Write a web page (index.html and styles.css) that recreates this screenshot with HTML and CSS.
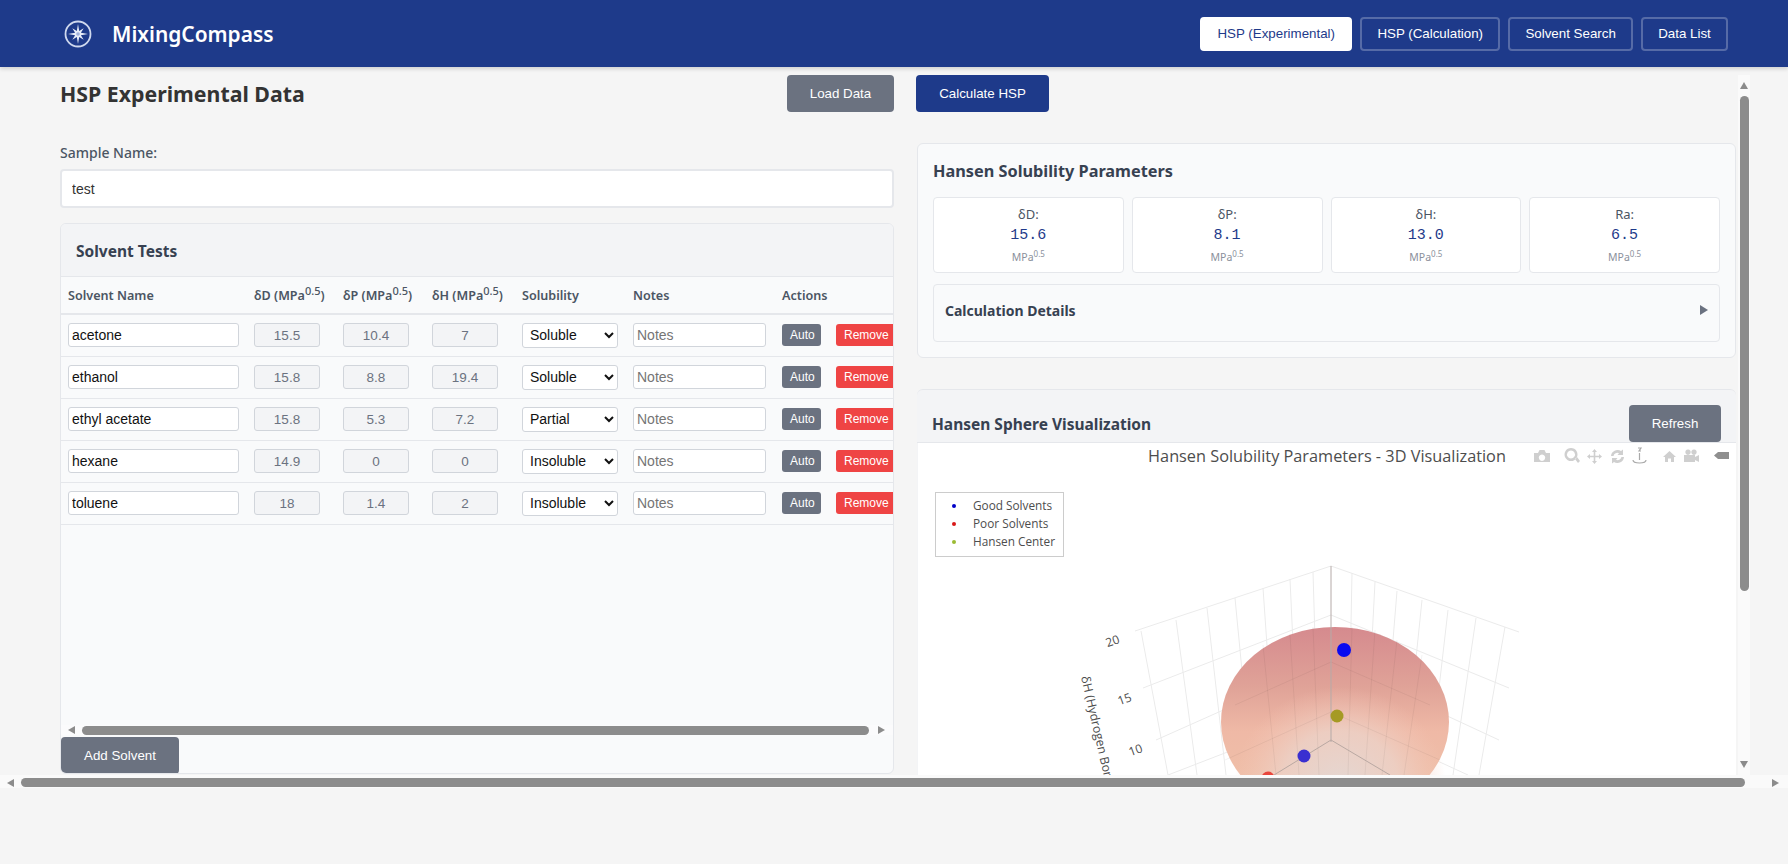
FILE: index.html
```html
<!DOCTYPE html>
<html lang="en">
<head>
    <meta charset="UTF-8">
    <title>MixingCompass</title>
    <link rel="stylesheet" href="styles.css">
</head>
<body>
    <header class="app-header">
        <div class="brand">
            <svg class="brand-logo" width="28" height="28" viewBox="0 0 28 28">
                <circle cx="14" cy="14" r="12.5" fill="none" stroke="#cfd8ee" stroke-width="1.8"/>
                <polygon points="14,4 15.2,11.1 19.7,8.3 16.9,12.8 24,14 16.9,15.2 19.7,19.7 15.2,16.9 14,24 12.8,16.9 8.3,19.7 11.1,15.2 4,14 11.1,12.8 8.3,8.3 12.8,11.1" fill="#e8edf8"/>
                <circle cx="14" cy="14" r="1.8" fill="#9fb0da"/>
            </svg>
            <span class="brand-name">MixingCompass</span>
        </div>
        <nav class="main-nav">
            <button class="nav-btn active">HSP (Experimental)</button>
            <button class="nav-btn">HSP (Calculation)</button>
            <button class="nav-btn">Solvent Search</button>
            <button class="nav-btn">Data List</button>
        </nav>
    </header>

    <main class="workspace">
        <section class="left-col">
            <div class="toolbar">
                <h1 class="page-title">HSP Experimental Data</h1>
                <button class="btn btn-gray btn-load">Load Data</button>
            </div>
            <label class="field-label" for="sample-name">Sample Name:</label>
            <input class="sample-input" id="sample-name" type="text" value="test">

            <div class="tests-panel">
                <div class="tests-header"><h2 class="panel-title">Solvent Tests</h2></div>
                <div class="table-wrap">
                    <table class="tests-table">
                        <colgroup>
                            <col class="col-name"><col class="col-d"><col class="col-p"><col class="col-h">
                            <col class="col-sol"><col class="col-notes"><col class="col-actions">
                        </colgroup>
                        <thead>
                            <tr>
                                <th>Solvent Name</th>
                                <th>δD (MPa<sup>0.5</sup>)</th>
                                <th>δP (MPa<sup>0.5</sup>)</th>
                                <th>δH (MPa<sup>0.5</sup>)</th>
                                <th>Solubility</th>
                                <th>Notes</th>
                                <th>Actions</th>
                            </tr>
                        </thead>
                        <tbody>
                            <tr>
                                <td><input class="cell-input name-input" value="acetone"></td>
                                <td><input class="cell-input num-input" value="15.5" readonly></td>
                                <td><input class="cell-input num-input" value="10.4" readonly></td>
                                <td><input class="cell-input num-input" value="7" readonly></td>
                                <td><select class="cell-select"><option>Soluble</option></select></td>
                                <td><input class="cell-input notes-input" placeholder="Notes"></td>
                                <td class="actions"><button class="mini-btn mini-auto">Auto</button><button class="mini-btn mini-remove">Remove</button></td>
                            </tr>
                            <tr>
                                <td><input class="cell-input name-input" value="ethanol"></td>
                                <td><input class="cell-input num-input" value="15.8" readonly></td>
                                <td><input class="cell-input num-input" value="8.8" readonly></td>
                                <td><input class="cell-input num-input" value="19.4" readonly></td>
                                <td><select class="cell-select"><option>Soluble</option></select></td>
                                <td><input class="cell-input notes-input" placeholder="Notes"></td>
                                <td class="actions"><button class="mini-btn mini-auto">Auto</button><button class="mini-btn mini-remove">Remove</button></td>
                            </tr>
                            <tr>
                                <td><input class="cell-input name-input" value="ethyl acetate"></td>
                                <td><input class="cell-input num-input" value="15.8" readonly></td>
                                <td><input class="cell-input num-input" value="5.3" readonly></td>
                                <td><input class="cell-input num-input" value="7.2" readonly></td>
                                <td><select class="cell-select"><option>Partial</option></select></td>
                                <td><input class="cell-input notes-input" placeholder="Notes"></td>
                                <td class="actions"><button class="mini-btn mini-auto">Auto</button><button class="mini-btn mini-remove">Remove</button></td>
                            </tr>
                            <tr>
                                <td><input class="cell-input name-input" value="hexane"></td>
                                <td><input class="cell-input num-input" value="14.9" readonly></td>
                                <td><input class="cell-input num-input" value="0" readonly></td>
                                <td><input class="cell-input num-input" value="0" readonly></td>
                                <td><select class="cell-select"><option>Insoluble</option></select></td>
                                <td><input class="cell-input notes-input" placeholder="Notes"></td>
                                <td class="actions"><button class="mini-btn mini-auto">Auto</button><button class="mini-btn mini-remove">Remove</button></td>
                            </tr>
                            <tr>
                                <td><input class="cell-input name-input" value="toluene"></td>
                                <td><input class="cell-input num-input" value="18" readonly></td>
                                <td><input class="cell-input num-input" value="1.4" readonly></td>
                                <td><input class="cell-input num-input" value="2" readonly></td>
                                <td><select class="cell-select"><option>Insoluble</option></select></td>
                                <td><input class="cell-input notes-input" placeholder="Notes"></td>
                                <td class="actions"><button class="mini-btn mini-auto">Auto</button><button class="mini-btn mini-remove">Remove</button></td>
                            </tr>
                        </tbody>
                    </table>
                </div>
                <div class="hbar table-bar">
                    <span class="arrow arrow-left"></span>
                    <span class="hbar-thumb"></span>
                    <span class="arrow arrow-right"></span>
                </div>
                <div class="add-row"><button class="btn btn-gray btn-add">Add Solvent</button></div>
            </div>
        </section>

        <section class="right-col">
            <div class="right-toolbar"><button class="btn btn-blue">Calculate HSP</button></div>

            <div class="results-panel">
                <h2 class="panel-title results-title">Hansen Solubility Parameters</h2>
                <div class="param-grid">
                    <div class="param-card">
                        <div class="param-label">δD:</div>
                        <div class="param-value">15.6</div>
                        <div class="param-unit">MPa<sup>0.5</sup></div>
                    </div>
                    <div class="param-card">
                        <div class="param-label">δP:</div>
                        <div class="param-value">8.1</div>
                        <div class="param-unit">MPa<sup>0.5</sup></div>
                    </div>
                    <div class="param-card">
                        <div class="param-label">δH:</div>
                        <div class="param-value">13.0</div>
                        <div class="param-unit">MPa<sup>0.5</sup></div>
                    </div>
                    <div class="param-card">
                        <div class="param-label">Ra:</div>
                        <div class="param-value">6.5</div>
                        <div class="param-unit">MPa<sup>0.5</sup></div>
                    </div>
                </div>
                <div class="details-box">
                    <span class="details-title">Calculation Details</span>
                    <span class="details-arrow"></span>
                </div>
            </div>

            <div class="viz-panel">
                <div class="viz-header">
                    <h2 class="panel-title">Hansen Sphere Visualization</h2>
                    <button class="btn btn-gray btn-refresh">Refresh</button>
                </div>
                <div class="plot">
                    <svg class="plot-svg" width="818" height="332" viewBox="918 443 818 332">
                        <defs>
                            <linearGradient id="sphere-fill" x1="0" y1="0" x2="0" y2="1">
                                <stop offset="0" stop-color="#d58a8e"/>
                                <stop offset="0.32" stop-color="#e0a398"/>
                                <stop offset="0.55" stop-color="#efb9a6"/>
                                <stop offset="1" stop-color="#efc4aa"/>
                            </linearGradient>
                            <radialGradient id="sphere-lobe" cx="0.5" cy="0.55" r="0.5">
                                <stop offset="0" stop-color="#e4d8d4" stop-opacity="0.95"/>
                                <stop offset="0.55" stop-color="#ecd2c8" stop-opacity="0.8"/>
                                <stop offset="1" stop-color="#f4c6b6" stop-opacity="0"/>
                            </radialGradient>
                        </defs>

                        <g class="grid-lines">
                            <path d="M1331 566L1135 631M1331 615L1143 688M1331 662L1156 740M1331 712L1168 775"/>
                            <path d="M1331 566L1519 632M1331 615L1509 688M1331 662L1499 740M1331 712L1468 775"/>
                            <path d="M1141 631L1168 775M1176 620L1197 775M1207 608L1226 775M1235 598L1252 775M1263 588L1276 775M1290 579L1299 775M1313 572L1319 775"/>
                            <path d="M1352 573L1348 775M1375 582L1365 775M1397 591L1382 775M1422 600L1404 775M1448 610L1429 775M1476 618L1453 775M1505 627L1479 775"/>
                        </g>

                        <ellipse cx="1335" cy="722" rx="114" ry="95" fill="url(#sphere-fill)"/>
                        <ellipse cx="1340" cy="775" rx="106" ry="98" fill="url(#sphere-lobe)"/>
                        <path class="grid-over" d="M1313 627L1319 775M1290 635L1299 775M1263 645L1276 775M1352 627L1348 775M1375 630L1365 775M1397 640L1382 775M1422 655L1404 775M1331 662L1235 705M1331 662L1430 705M1331 712L1225 760M1331 712L1440 760"/>
                        <line class="axis-line" x1="1331" y1="566" x2="1331" y2="742"/>
                        <path class="floor-line" d="M1331 740L1274 775M1331 740L1390 775"/>

                        <circle cx="1344" cy="650" r="7" fill="#0a0af0"/>
                        <circle cx="1337" cy="716" r="6.5" fill="#a59a24"/>
                        <circle cx="1304" cy="756" r="6.5" fill="#3a2fd0"/>
                        <circle cx="1268" cy="778" r="6.5" fill="#e8463c"/>

                        <text class="plot-title" x="1327" y="462" text-anchor="middle">Hansen Solubility Parameters - 3D Visualization</text>

                        <rect class="legend-box" x="935.5" y="492.5" width="128" height="64"/>
                        <circle cx="954" cy="506" r="2" fill="#0000c8"/>
                        <circle cx="954" cy="524" r="2" fill="#d81818"/>
                        <circle cx="954" cy="542" r="2" fill="#9bbb33"/>
                        <text class="legend-text" x="973" y="510">Good Solvents</text>
                        <text class="legend-text" x="973" y="528">Poor Solvents</text>
                        <text class="legend-text" x="973" y="546">Hansen Center</text>

                        <text class="tick" transform="translate(1114 645) rotate(-20)" text-anchor="middle">20</text>
                        <text class="tick" transform="translate(1126 703) rotate(-20)" text-anchor="middle">15</text>
                        <text class="tick" transform="translate(1137 754) rotate(-20)" text-anchor="middle">10</text>
                        <text class="axis-title" transform="translate(1081 677) rotate(77)">δH (Hydrogen Bonding)</text>

                        <g class="modebar">
                            <path d="M1534 453h4l1.5-3h5l1.5 3h4v9h-16zM1542 454.5a3.2 3.2 0 1 0 .01 0z" fill-rule="evenodd"/>
                            <path d="M1571 448a6.500 6.500 0 1 0 .01 0zM1571 450.500a4 4 0 1 1-.01 0zM1575 459l2-2 3 4-2 2z" fill-rule="evenodd"/>
                            <path d="M1594.500 449l2.500 3h-1.700v3.700h3.700V454l3 2.500-3 2.500v-1.700h-3.700V461h1.700l-2.500 3-2.500-3h1.700v-3.700h-3.700V459l-3-2.500 3-2.500v1.700h3.700V452H1592z"/>
                            <path d="M1611 456a6.500 6.500 0 0 1 10-5l2-1.500v5.500h-5.500l1.500-1.800a4 4 0 0 0-5.500 2.800zM1624 457a6.500 6.500 0 0 1-10 5l-2 1.500V458h5.500l-1.500 1.800a4 4 0 0 0 5.500-2.800z"/>
                            <path class="modebar-dark" d="M1638 448h3l-2 3h2M1639.500 453v7M1633 460c0 2 2.500 3 6.500 3s6.500-1 6.500-3"/>
                            <path d="M1669.500 451l6.500 6h-2v5h-3v-3.500h-3V462h-3v-5h-2z"/>
                            <path d="M1684 455h11v7h-11zM1695 457l4-2v7l-4-2zM1688 449.500a2.700 2.700 0 1 0 .01 0zM1694 449.500a2.700 2.700 0 1 0 .01 0z"/>
                            <path class="modebar-pill" d="M1714 455.500l4-3.500h11v7h-11z"/>
                        </g>
                    </svg>
                </div>
            </div>
        </section>

        <div class="vbar">
            <span class="arrow arrow-up"></span>
            <span class="vbar-thumb"></span>
            <span class="vbar-rest"></span>
            <span class="arrow arrow-down"></span>
        </div>
    </main>

    <div class="hbar page-bar">
        <span class="arrow arrow-left"></span>
        <span class="hbar-thumb"></span>
        <span class="arrow arrow-right"></span>
    </div>
</body>
</html>
```

FILE: styles.css
```css
* {
    box-sizing: border-box;
}
html, body {
    margin: 0;
    padding: 0;
    height: 864px;
    overflow: hidden;
}
body {
    background-color: #f5f5f5;
    color: #333;
    font-family: "Liberation Sans", Arial, sans-serif;
    font-size: 13.33px;
}
h1, h2 {
    margin: 0;
}
button {
    font-family: "Liberation Sans", Arial, sans-serif;
    font-size: 13.33px;
    cursor: pointer;
}

/* header */
.app-header {
    height: 67px;
    background-color: #1e3a8a;
    box-shadow: 0 2px 4px rgba(0, 0, 0, 0.15);
    display: flex;
    justify-content: space-between;
    align-items: center;
    padding: 0 60px 0 64px;
    position: relative;
}
.brand {
    display: flex;
    align-items: center;
    gap: 20px;
}
.brand-logo {
    display: block;
}
.brand-name {
    color: #fff;
    font-family: "Noto Sans", sans-serif;
    font-size: 20.9px;
    font-weight: 600;
}
.main-nav {
    display: flex;
    gap: 8px;
}
.nav-btn {
    height: 34px;
    padding: 0 15.2px;
    background: transparent;
    border: 2px solid rgba(255, 255, 255, 0.25);
    border-radius: 4px;
    color: #fff;
}
.nav-btn.active {
    background: #fff;
    border-color: #fff;
    color: #1e3a8a;
}

/* layout */
.workspace {
    height: 708px;
    display: flex;
    padding: 8px 38px 0 60px;
}
.left-col {
    width: 834px;
    flex-shrink: 0;
    display: flex;
    flex-direction: column;
}
.right-col {
    width: 820px;
    flex-shrink: 0;
    margin-left: 22px;
    overflow: hidden;
}

/* buttons */
.btn {
    height: 37px;
    border: none;
    border-radius: 4px;
    color: #fff;
    padding: 0 22px;
}
.btn-gray {
    background-color: #6b7280;
}
.btn-blue {
    background-color: #1e3a8a;
}
.btn-load {
    width: 107px;
    padding: 0;
}

/* left column */
.toolbar {
    display: flex;
    justify-content: space-between;
    align-items: center;
    height: 37px;
}
.page-title {
    font-family: "Noto Sans", sans-serif;
    font-size: 21.3px;
    font-weight: 700;
    color: #333;
}
.field-label {
    margin-top: 31px;
    font-family: "Noto Sans", sans-serif;
    font-size: 14px;
    font-weight: 500;
    color: #4b5563;
    line-height: 20px;
    height: 26px;
}
.sample-input {
    height: 39px;
    width: 100%;
    padding: 0 10px;
    border: 2px solid #e5e7eb;
    border-radius: 4px;
    background: #fff;
    font-family: "Liberation Sans", Arial, sans-serif;
    font-size: 14px;
    color: #333;
}
.tests-panel {
    margin-top: 15px;
    height: 551px;
    background-color: #f9fafb;
    border: 1px solid #e5e7eb;
    border-radius: 6px;
    display: flex;
    flex-direction: column;
    overflow: hidden;
}
.tests-header {
    height: 53px;
    flex-shrink: 0;
    background-color: #f3f4f6;
    border-bottom: 1px solid #e5e7eb;
    padding: 2px 15px 0;
    display: flex;
    align-items: center;
}
.panel-title {
    font-family: "Noto Sans", sans-serif;
    font-size: 15.5px;
    font-weight: 700;
    color: #374151;
}
.results-title {
    font-size: 16.3px;
}
.table-wrap {
    flex: 1;
    overflow: hidden;
}
.tests-table {
    width: 850px;
    margin-left: -1px;
    table-layout: fixed;
    border-collapse: collapse;
}
.col-name { width: 186px; }
.col-d { width: 89px; }
.col-p { width: 89px; }
.col-h { width: 90px; }
.col-sol { width: 111px; }
.col-notes { width: 149px; }
.col-actions { width: 136px; }
.tests-table th {
    height: 37px;
    padding: 0 8px;
    text-align: left;
    font-family: "Noto Sans", sans-serif;
    font-size: 12.6px;
    font-weight: 600;
    color: #4b5563;
    white-space: nowrap;
    border-bottom: 2px solid #e5e7eb;
}
.tests-table th sup {
    font-size: 11px;
    font-weight: 500;
    line-height: 0;
}
.tests-table td {
    height: 42px;
    padding: 0 8px;
    border-bottom: 1px solid #e5e7eb;
    white-space: nowrap;
}
.cell-input {
    display: block;
    height: 24px;
    padding: 0 3px;
    border: 1px solid #d1d5db;
    border-radius: 3px;
    background: #fff;
    font-family: "Liberation Sans", Arial, sans-serif;
    font-size: 14px;
    color: #111;
}
.name-input {
    width: 171px;
}
.num-input {
    width: 66px;
    text-align: center;
    background-color: #f3f4f6;
    color: #6b7280;
    font-size: 13.5px;
}
.notes-input {
    width: 133px;
}
.cell-select {
    display: block;
    width: 96px;
    height: 25px;
    padding: 0 3px;
    border: 1px solid #d1d5db;
    border-radius: 3px;
    background-color: #fff;
    font-family: "Liberation Sans", Arial, sans-serif;
    font-size: 14px;
    color: #111;
}
.actions {
    overflow: visible;
}
.mini-btn {
    height: 22px;
    padding: 0 8px;
    border: none;
    border-radius: 3px;
    color: #fff;
    font-size: 12px;
    vertical-align: middle;
}
.mini-auto {
    width: 39px;
    background-color: #6b7280;
}
.mini-remove {
    width: 60px;
    margin-left: 15px;
    background-color: #ef4444;
}
.add-row {
    height: 38px;
    flex-shrink: 0;
    padding-top: 2px;
}
.btn-add {
    width: 118px;
    padding: 0;
}

/* fake scrollbars */
.hbar {
    display: flex;
    align-items: center;
    flex-shrink: 0;
}
.hbar-thumb {
    display: block;
    height: 9px;
    background-color: #8c8c8c;
    border-radius: 5px;
}
.arrow {
    display: block;
    width: 0;
    height: 0;
    border-style: solid;
    border-color: transparent;
    flex-shrink: 0;
}
.arrow-left {
    border-width: 4px 7px 4px 0;
    border-right-color: #8c8c8c;
}
.arrow-right {
    border-width: 4px 0 4px 7px;
    border-left-color: #8c8c8c;
}
.arrow-up {
    border-width: 0 4px 7px 4px;
    border-bottom-color: #8c8c8c;
}
.arrow-down {
    border-width: 7px 4px 0 4px;
    border-top-color: #8c8c8c;
}
.table-bar {
    height: 10px;
    padding-left: 7px;
    background-color: #fbfbfc;
}
.table-bar .hbar-thumb {
    width: 787px;
    margin: 0 9px 0 7px;
}
.page-bar {
    height: 13px;
    padding: 2px 0 0 7px;
    background-color: #fafafa;
}
.page-bar .hbar-thumb {
    width: 1724px;
    margin: 0 27px 0 7px;
}
.vbar {
    width: 12px;
    margin-left: 2px;
    flex-shrink: 0;
    background-color: #fafafa;
    display: flex;
    flex-direction: column;
    align-items: center;
    padding: 7px 0;
}
.vbar-thumb {
    width: 9px;
    height: 495px;
    margin-top: 7px;
    background-color: #8c8c8c;
    border-radius: 5px;
}
.vbar-rest {
    flex: 1;
}

/* right column */
.right-toolbar {
    height: 37px;
}
.btn-blue {
    width: 133px;
    padding: 0;
}
.results-panel {
    margin: 31px 0 0 1px;
    height: 215px;
    background-color: #f9fafb;
    border: 1px solid #e5e7eb;
    border-radius: 6px;
    padding: 16px 15px 0;
}
.results-panel .panel-title {
    line-height: 22px;
}
.param-grid {
    display: grid;
    grid-template-columns: repeat(4, 1fr);
    gap: 8px;
    margin-top: 15px;
}
.param-card {
    height: 76px;
    background: #fff;
    border: 1px solid #e5e7eb;
    border-radius: 4px;
    text-align: center;
    padding-top: 8px;
}
.param-label {
    font-family: "Noto Sans", sans-serif;
    font-size: 13px;
    line-height: 17px;
    color: #4b5563;
}
.param-value {
    font-family: "Liberation Mono", monospace;
    font-size: 15px;
    font-weight: 400;
    line-height: 20px;
    margin-top: 3px;
    color: #1e3a8a;
}
.param-unit {
    font-family: "Noto Sans", sans-serif;
    font-size: 10.5px;
    line-height: 16px;
    margin-top: 3px;
    color: #8b919c;
}
.param-unit sup {
    font-size: 8px;
    line-height: 0;
}
.details-box {
    margin-top: 11px;
    height: 58px;
    background-color: #f9fafb;
    border: 1px solid #e5e7eb;
    border-radius: 4px;
    padding: 15px 11px 0 11px;
    display: flex;
    justify-content: space-between;
    align-items: flex-start;
}
.details-title {
    font-family: "Noto Sans", sans-serif;
    font-size: 14px;
    font-weight: 700;
    line-height: 22px;
    color: #374151;
}
.details-arrow {
    display: block;
    width: 0;
    height: 0;
    margin-top: 5px;
    border-style: solid;
    border-width: 5px 0 5px 8px;
    border-color: transparent transparent transparent #6b7280;
}
.viz-panel {
    margin: 31px 0 0 1px;
    height: 400px;
    background-color: #f3f4f6;
    border-top: 1px solid #e5e7eb;
    border-radius: 6px 6px 0 0;
}
.viz-header {
    height: 53px;
    padding: 15px 15px 0;
    display: flex;
    justify-content: space-between;
    align-items: flex-start;
    border-bottom: 1px solid #e5e7eb;
}
.viz-header .panel-title {
    line-height: 38px;
}
.btn-refresh {
    width: 92px;
    padding: 0;
}
.plot {
    height: 332px;
    margin-left: 1px;
    background: #fff;
    overflow: hidden;
}
.plot-svg {
    display: block;
}
.plot-svg text {
    font-family: "Open Sans", sans-serif;
    fill: #4d4d4d;
}
.plot-title {
    font-size: 16.3px;
}
.legend-box {
    fill: #fff;
    stroke: #ccc;
    stroke-width: 1;
}
.legend-text {
    font-size: 11.8px;
}
.tick {
    font-size: 12px;
}
.axis-title {
    font-size: 12.3px;
}
.grid-lines path {
    fill: none;
    stroke: #ebebeb;
    stroke-width: 1;
}
.grid-over {
    fill: none;
    stroke: #000;
    stroke-opacity: 0.05;
    stroke-width: 1;
}
.axis-line {
    stroke: #b5aaa8;
    stroke-width: 1;
}
.floor-line {
    fill: none;
    stroke: #b9a8a2;
    stroke-width: 1;
}
.modebar path {
    fill: #cfcfcf;
}
.modebar .modebar-dark {
    fill: none;
    stroke: #a9a9a9;
    stroke-width: 1.2;
}
.modebar .modebar-pill {
    fill: #8f8f8f;
}
```
